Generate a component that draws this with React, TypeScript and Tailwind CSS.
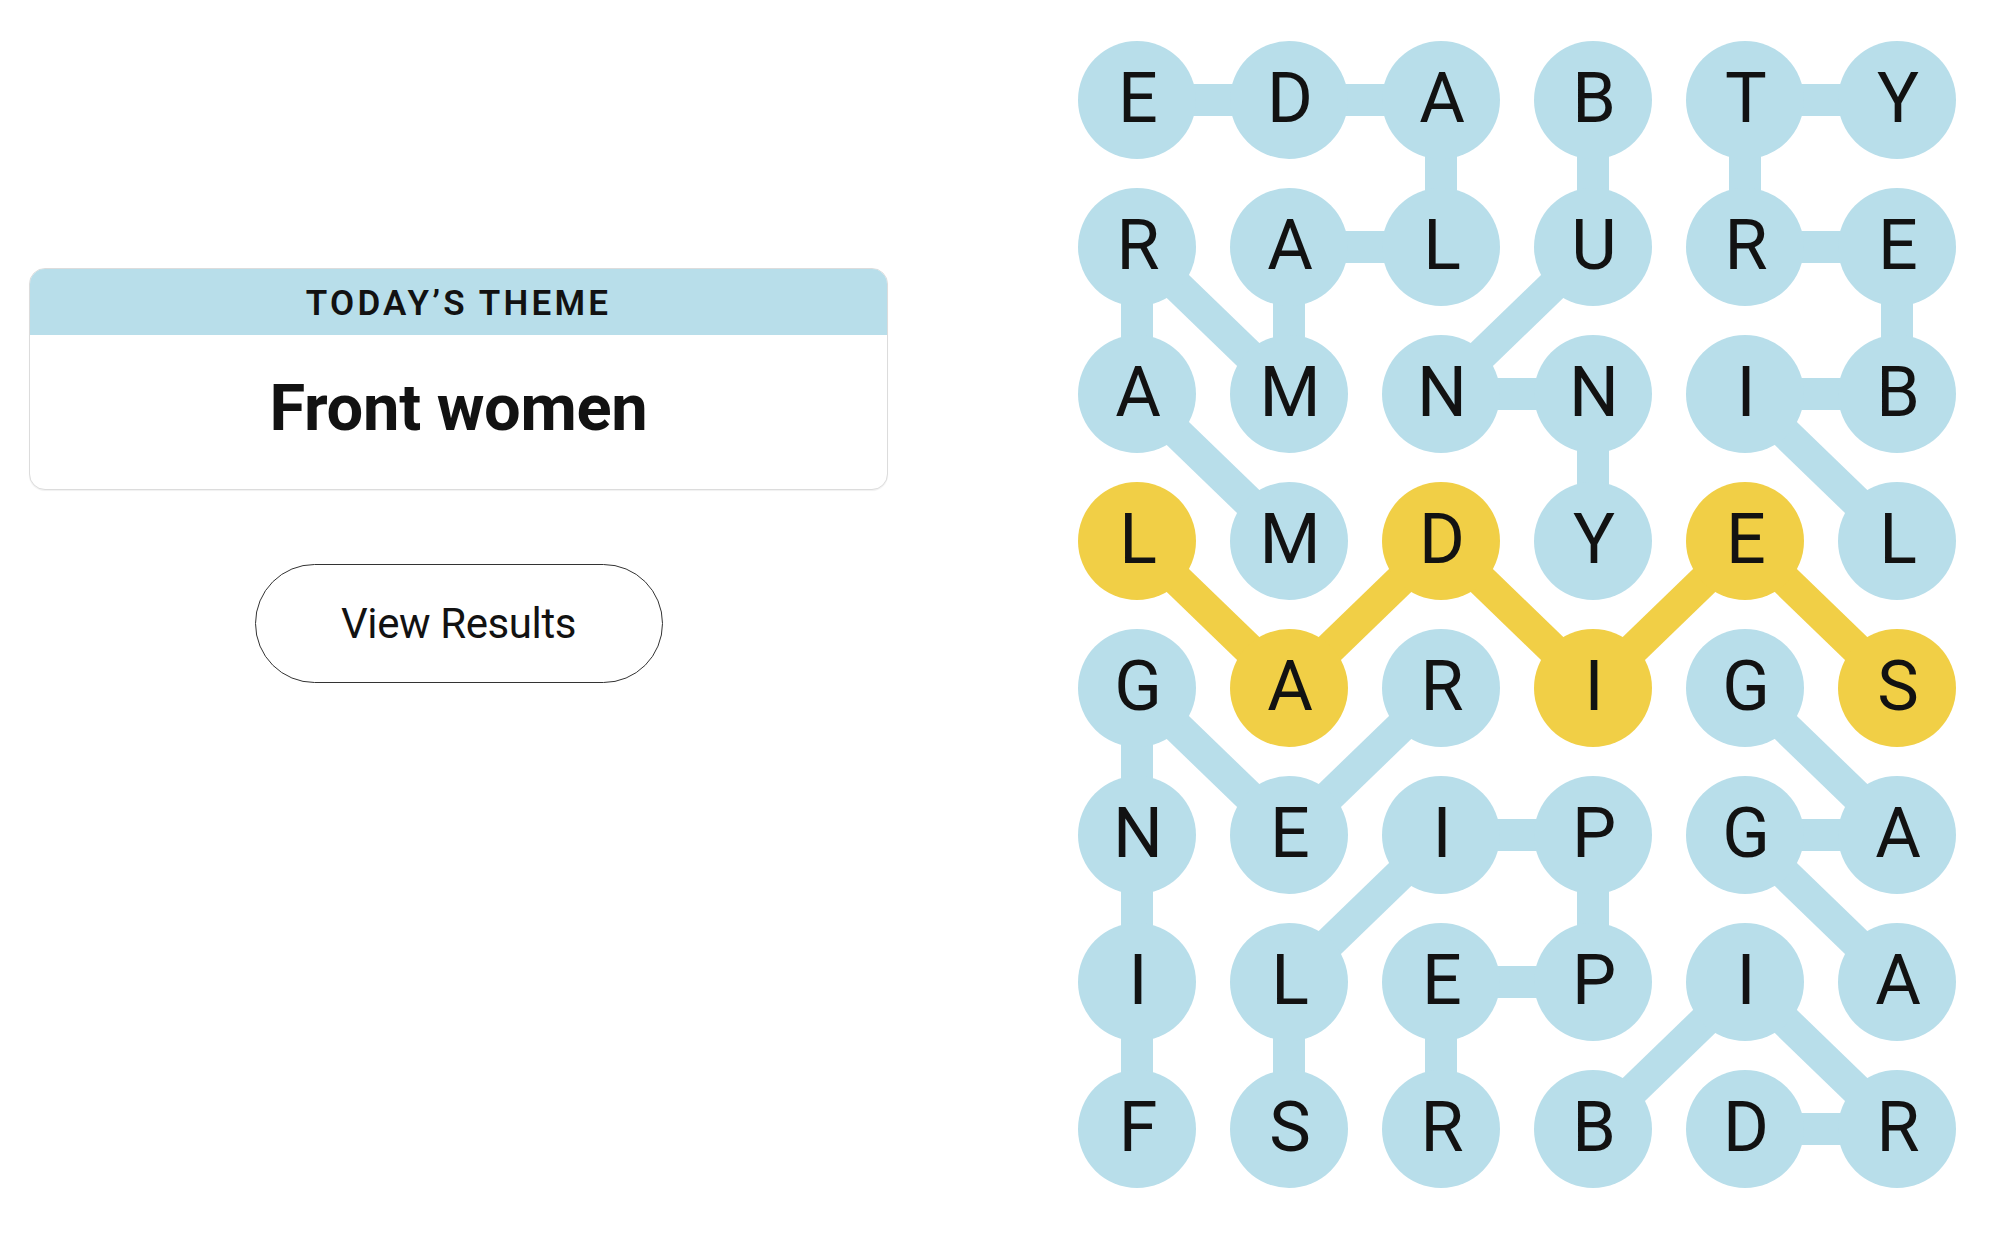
import React from "react";

const GRID = [
  "EDABTY",
  "RALURE",
  "AMNNIB",
  "LMDYEL",
  "GARIGS",
  "NEIPGA",
  "ILEPIA",
  "FSRBDR",
];

const YELLOW_CELLS = new Set(["3-0", "4-1", "3-2", "4-3", "3-4", "4-5"]);

const BLUE_LINKS: [number, number, number, number][] = [
  [0, 0, 0, 1], [0, 1, 0, 2], [0, 2, 1, 2], [1, 2, 1, 1], [1, 1, 2, 1], [2, 1, 1, 0], [1, 0, 2, 0], [2, 0, 3, 1],
  [0, 3, 1, 3], [1, 3, 2, 2], [2, 2, 2, 3], [2, 3, 3, 3],
  [0, 5, 0, 4], [0, 4, 1, 4], [1, 4, 1, 5], [1, 5, 2, 5], [2, 5, 2, 4], [2, 4, 3, 5],
  [4, 0, 5, 0], [4, 0, 5, 1], [5, 1, 4, 2], [5, 0, 6, 0], [6, 0, 7, 0],
  [5, 2, 5, 3], [5, 2, 6, 1], [6, 1, 7, 1], [5, 3, 6, 3], [6, 3, 6, 2], [6, 2, 7, 2],
  [4, 4, 5, 5], [5, 5, 5, 4], [5, 4, 6, 5],
  [7, 3, 6, 4], [6, 4, 7, 5], [7, 5, 7, 4],
];

const YELLOW_LINKS: [number, number, number, number][] = [
  [3, 0, 4, 1], [4, 1, 3, 2], [3, 2, 4, 3], [4, 3, 3, 4], [3, 4, 4, 5],
];

const BLUE = "#b8deea";
const YELLOW = "#f1cf46";

const cx = (c: number) => 59 + 152 * c;
const cy = (r: number) => 59 + 147 * r;

function Board() {
  return (
    <div className="relative w-[878px] h-[1147px]">
      <svg className="absolute inset-0" width={878} height={1147} viewBox="0 0 878 1147">
        {BLUE_LINKS.map(([r1, c1, r2, c2], i) => (
          <line key={"b" + i} x1={cx(c1)} y1={cy(r1)} x2={cx(c2)} y2={cy(r2)} stroke={BLUE} strokeWidth={32} />
        ))}
        {YELLOW_LINKS.map(([r1, c1, r2, c2], i) => (
          <line key={"y" + i} x1={cx(c1)} y1={cy(r1)} x2={cx(c2)} y2={cy(r2)} stroke={YELLOW} strokeWidth={32} />
        ))}
      </svg>
      <div className="relative grid grid-cols-[repeat(6,118px)] grid-rows-[repeat(8,118px)] gap-x-[34px] gap-y-[29px]">
        {GRID.map((row, r) =>
          row.split("").map((ch, c) => {
            const yellow = YELLOW_CELLS.has(`${r}-${c}`);
            return (
              <div
                key={`${r}-${c}`}
                className={
                  "w-[118px] h-[118px] rounded-full flex items-center justify-center text-[70px] leading-none text-[#121212] font-['Roboto',sans-serif] font-normal pb-[4px] pl-[2px] " +
                  (yellow ? "bg-[#f1cf46]" : "bg-[#b8deea]")
                }
              >
                {ch}
              </div>
            );
          })
        )}
      </div>
    </div>
  );
}

export default function App() {
  return (
    <div className="w-[1999px] h-[1233px] bg-white flex">
      <div className="ml-[29px] mt-[268px] w-[859px] flex flex-col items-center">
        <div className="w-full rounded-2xl border border-[#dcdcdc] overflow-hidden bg-white shadow-[0_1px_1px_rgba(0,0,0,0.06)]">
          <div className="h-[66px] bg-[#b8deea] flex items-center justify-center">
            <span className="font-['Roboto',sans-serif] font-semibold text-[35px] tracking-[3.2px] text-[#121212] leading-none pt-[2px]">
              TODAY’S THEME
            </span>
          </div>
          <div className="h-[154px] flex items-center justify-center">
            <span className="font-['Roboto',sans-serif] font-bold text-[65px] tracking-[-0.3px] text-[#121212] leading-none pb-[8px]">
              Front women
            </span>
          </div>
        </div>
        <button className="mt-[74px] w-[408px] h-[119px] rounded-full border-[1.5px] border-[#333333] bg-white flex items-center justify-center">
          <span className="font-['Roboto',sans-serif] font-normal text-[42px] tracking-[-0.4px] text-[#121212] leading-none">
            View Results
          </span>
        </button>
      </div>
      <div className="ml-auto mr-[43px] mt-[41px]">
        <Board />
      </div>
    </div>
  );
}
